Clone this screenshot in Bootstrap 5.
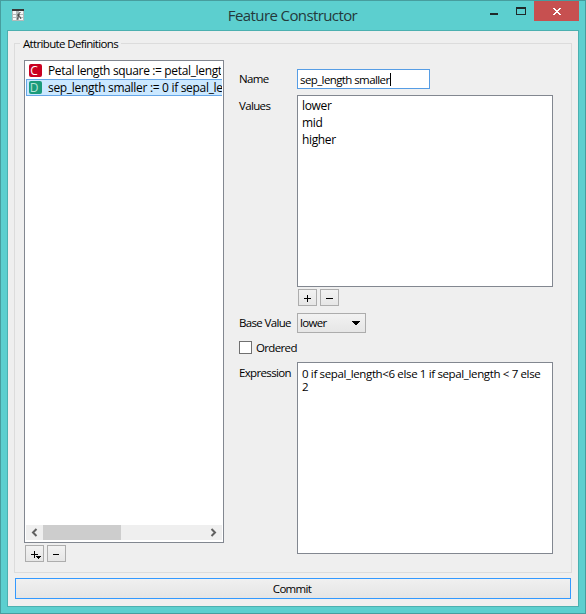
<!DOCTYPE html>
<html lang="en">
<head>
<meta charset="utf-8">
<title>Feature Constructor</title>
<link href="https://cdn.jsdelivr.net/npm/bootstrap@5.3.0/dist/css/bootstrap.min.css" rel="stylesheet">
<style>
body{font:11.5px/17px "Open Sans","Noto Sans",sans-serif;color:#000;width:586px;height:614px;overflow:hidden;letter-spacing:-.65px}
.win{width:586px;height:614px;background:#5ccfcf;border:1px solid #479d9e;padding:0 6px 6px 6px}
.titlebar{height:29px;flex:none}
.win-icon{margin:8px 0 0 5px}
.win-title{left:0;right:1px;top:3px;font-size:15px;line-height:22px;color:#24393b;letter-spacing:-.6px}
.win-controls{right:0;top:0}
.ctl{width:45px;height:20px;border:0;padding:0;line-height:0}
.ctl svg{display:block}
.ctl-close{background:#c75050}
.client{background:#efefef;border:1px solid #4bb0b0;padding:12px 6px 7px}
.group{border:1px solid #dcdcdc;height:530px;padding:16px 0 0 9px}
.group-title{left:5px;top:-9px;background:#efefef;padding:0 3px;line-height:17px}
.box{background:#fff;border:1px solid #828790}
.attr-list{width:200px;height:483px;padding:1px}
.attr-row{height:17px;border:1px solid transparent;padding-left:2px;line-height:15px;font-size:12px;letter-spacing:-.35px}
.attr-row.current{background:#cbe8ff;border-color:#66a7e8;border-right:0;letter-spacing:-.31px}
.kind{width:13px;height:13px;border-radius:2px;color:#fff;font-size:12px;line-height:13px;margin-right:6px;padding-right:3px;letter-spacing:0}
.kind-c{background:#ca0020}
.kind-d{background:#1a9b7b;color:#b7e2d6}
.hscroll{height:15px;background:#efefef;margin-bottom:1px}
.thumb{width:78px;height:15px;background:#cdcdcd}
.arrow{width:17px;height:15px;display:block}
.tools{gap:3px}
.tools-left{padding:2px 0 0 1px}
.tools-values{margin:2px 0 7px 59px}
.tool{width:19px;height:17px;border:1px solid #adadad;background:linear-gradient(#f2f2f2,#e6e6e6);padding:0}
.tool svg{display:block}
.form-area{margin-left:15px;padding-top:9px}
.lbl{width:58px;flex:none;padding-top:2px;line-height:17px}
.name-row .lbl,.combo-row .lbl{padding-top:1px}
.name-row{margin-bottom:6px;height:20px}
.name-in{width:133px;height:20px;border:1px solid #569de5;background:#fff;padding:1px 2px 0 2px;letter-spacing:-.6px}
.caret{width:1px;height:13px;background:#000}
.area{width:256px;height:192px}
.values{padding:1px 0 0 4px;font-size:12px;letter-spacing:-.35px}
.combo-row{height:20px}
.combo{width:69px;height:20px;border:1px solid #acacac;background:linear-gradient(#f2f2f2,#e6e6e6);padding:0 5px 1px 2px}
.check-row{margin:6px 0;height:17px}
.check{width:13px;height:13px;border:1px solid #707070;background:#fff;margin-right:4px}
.expr{padding:4px 0 0 4px;line-height:13px;letter-spacing:-.36px}
.commit{width:556px;height:21px;border:1px solid #3399ff;background:linear-gradient(#f0f0f0,#e5e5e5);margin:5px 0 0 1px;padding:0 2px 0 0;line-height:19px;font-size:11.5px;letter-spacing:-.7px}
</style>
<script src="https://cdn.jsdelivr.net/npm/bootstrap@5.3.0/dist/js/bootstrap.bundle.min.js"></script>
</head>
<body>
<main class="win d-flex flex-column">
  <header class="titlebar position-relative">
    <svg class="win-icon d-block" width="12" height="12" shape-rendering="crispEdges"><path fill="#f4f7f7" d="M0 0h12v12H0z"/><path fill="#383838" d="M0 0h12v2H0z"/><path fill="#b3baba" d="M0 5h12v1H0zM0 8h12v1H0zM0 11h12v1H0zM0 2h1v10H0zM4 2h3v10H4zM11 2h1v10h-1z"/><path stroke="#444" fill="none" shape-rendering="auto" d="M8.500 3.500Q6.800 3 6.600 6L5.500 10.500M5 6h3M7.500 7l1.500 3"/></svg>
    <div class="win-title position-absolute text-center"><span>Feature Constructor</span></div>
    <div class="win-controls position-absolute d-flex">
      <svg width="50" height="20" shape-rendering="crispEdges"><path fill="#1f2929" d="M6 12h8v2H6z"/><path fill="#1f2929" fill-rule="evenodd" d="M32 6h10v8H32zM33 8v5h8V8z"/></svg>
      <button class="ctl ctl-close" aria-label="Close"><svg width="45" height="20" shape-rendering="crispEdges"><path fill="#fff" d="M19 7h2v1h1v1h2V8h1V7h2v1h-1v1h-1v1h-1v1h1v1h1v1h1v1h-2v-1h-1v-1h-2v1h-1v1h-2v-1h1v-1h1v-1h1v-1h-1V9h-1V8h-1z"/></svg></button>
    </div>
  </header>
  <section class="client flex-grow-1">
    <div class="group position-relative d-flex align-items-start">
      <div class="group-title position-absolute"><span>Attribute Definitions</span></div>
      <div>
        <div class="box attr-list d-flex flex-column">
          <div class="attr-row d-flex align-items-center text-nowrap overflow-hidden"><span class="kind kind-c text-center flex-shrink-0">C</span><span>Petal length square := petal_length</span></div>
          <div class="attr-row current d-flex align-items-center text-nowrap overflow-hidden"><span class="kind kind-d text-center flex-shrink-0">D</span><span>sep_length smaller := 0 if sepal_length</span></div>
          <div class="hscroll d-flex mt-auto">
            <svg class="arrow" viewBox="0 0 17 15"><path d="M10.500 4L7 7.500l3.500 3.500" fill="none" stroke="#606060" stroke-width="2"/></svg>
            <div class="thumb"></div>
            <svg class="arrow ms-auto" viewBox="0 0 17 15"><path d="M6.500 4L10 7.500 6.500 11" fill="none" stroke="#606060" stroke-width="2"/></svg>
          </div>
        </div>
        <div class="tools tools-left d-flex">
          <button class="tool" aria-label="Add"><svg width="17" height="15" shape-rendering="crispEdges"><path d="M5 8h7v1H5zM8 5h1v7H8zM10 10h5v1h-1v1h-1v1h-1v-1h-1v-1h-1z"/></svg></button>
          <button class="tool" aria-label="Remove"><svg width="17" height="15" shape-rendering="crispEdges"><path d="M5 8h6v1H5z"/></svg></button>
        </div>
      </div>
      <div class="form-area">
        <div class="name-row d-flex"><div class="lbl"><span>Name</span></div><div class="name-in d-flex align-items-center"><span>sep_length smaller</span><span class="caret"></span></div></div>
        <div class="d-flex"><div class="lbl"><span>Values</span></div><div class="box area values"><div><span>lower</span></div><div><span>mid</span></div><div><span>higher</span></div></div></div>
        <div class="tools tools-values d-flex">
          <button class="tool" aria-label="Add value"><svg width="17" height="15" shape-rendering="crispEdges"><path d="M5 8h7v1H5zM8 5h1v7H8z"/></svg></button>
          <button class="tool" aria-label="Remove value"><svg width="17" height="15" shape-rendering="crispEdges"><path d="M5 8h7v1H5z"/></svg></button>
        </div>
        <div class="combo-row d-flex"><div class="lbl"><span>Base Value</span></div><div class="combo d-flex align-items-center justify-content-between"><span>lower</span><svg width="8" height="4" shape-rendering="crispEdges"><path d="M0 0h8v1H7v1H6v1H5v1H3V3H2V2H1V1H0z"/></svg></div></div>
        <div class="check-row d-flex align-items-center"><span class="check"></span><span>Ordered</span></div>
        <div class="d-flex"><div class="lbl"><span>Expression</span></div><div class="box area expr"><div><span>0 if sepal_length&lt;6 else 1 if sepal_length &lt; 7 else</span></div><div><span>2</span></div></div></div>
      </div>
    </div>
    <button class="commit d-block"><span>Commit</span></button>
  </section>
</main>
</body>
</html>
